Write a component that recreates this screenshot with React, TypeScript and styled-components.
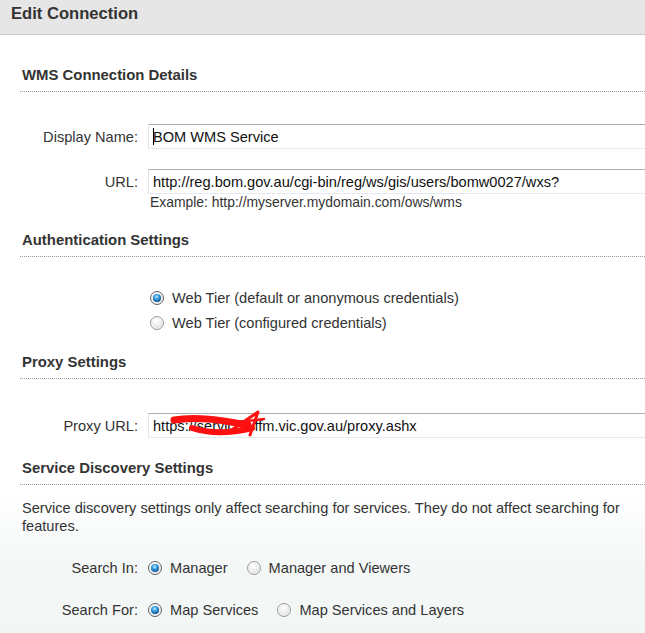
import React from "react";
import styled, { createGlobalStyle } from "styled-components";

const GlobalStyle = createGlobalStyle`
  html, body {
    margin: 0;
    padding: 0;
    background: #ffffff;
    overflow: hidden;
  }
  body {
    font-family: "Liberation Sans", Arial, sans-serif;
    color: #333333;
  }
`;

const Page = styled.div`
  width: 645px;
  min-height: 633px;
  overflow: hidden;
  background: linear-gradient(
    to bottom,
    #ffffff 0px,
    #ffffff 490px,
    #f3f7f6 570px,
    #f2f6f5 633px
  );
`;

const Header = styled.div`
  height: 34px;
  background: #e6e6e6;
  border-bottom: 1px solid #c8c8c8;
  box-sizing: content-box;
`;

const Title = styled.h1`
  margin: 0;
  padding: 4px 0 0 11px;
  font-size: 16.6px;
  line-height: 20px;
  font-weight: bold;
  color: #333333;
`;

const Body = styled.div`
  padding: 31px 0 0 20px;
  display: flex;
  flex-direction: column;
  gap: 21px;
`;

const Section = styled.section`
  display: flex;
  flex-direction: column;
`;

const Heading = styled.h2`
  margin: 0;
  padding: 0 2px 7px;
  font-size: 14.9px;
  line-height: 18px;
  font-weight: bold;
  color: #333333;
  border-bottom: 1px dotted #9a9a9a;
`;

const SectionBody = styled.div<{ $top?: number }>`
  margin-top: ${(p) => p.$top ?? 32}px;
  display: flex;
  flex-direction: column;
`;

const FieldRow = styled.div<{ $gap?: number }>`
  display: flex;
  align-items: center;
  margin-top: ${(p) => p.$gap ?? 0}px;
`;

const Label = styled.label`
  width: 118px;
  flex: none;
  text-align: right;
  font-size: 14.6px;
  color: #333333;
  padding-right: 10px;
`;

const InputWrap = styled.div`
  position: relative;
  flex: none;
`;

const TextInput = styled.input`
  box-sizing: border-box;
  width: 520px;
  height: 25px;
  margin: 0;
  padding: 0 4px;
  font-family: "Liberation Sans", Arial, sans-serif;
  font-size: 14.6px;
  color: #111111;
  background: #ffffff;
  border-style: solid;
  border-width: 1px;
  border-color: #abadb3 #dbdfe6 #e3e9ef #e2e3ea;
  outline: none;
`;

const Caret = styled.span`
  position: absolute;
  left: 5px;
  top: 4px;
  width: 1px;
  height: 17px;
  background: #000000;
`;

const Scribble = styled.svg`
  position: absolute;
  left: 20px;
  top: -6px;
  width: 100px;
  height: 34px;
  pointer-events: none;
`;

const Hint = styled.div`
  margin-left: 130px;
  font-size: 13.9px;
  line-height: 16px;
  color: #333333;
`;

const RadioList = styled.div`
  display: flex;
  flex-direction: column;
  gap: 7px;
  padding-left: 130px;
`;

const RadioOption = styled.label<{ $spaced?: boolean }>`
  display: inline-flex;
  align-items: center;
  gap: 8px;
  font-size: 14.6px;
  line-height: 18px;
  color: #333333;
  margin-left: ${(p) => (p.$spaced ? 19 : 0)}px;
`;

const RadioDot = styled.span<{ $on?: boolean }>`
  position: relative;
  width: 14px;
  height: 14px;
  flex: none;
  box-sizing: border-box;
  border-radius: 50%;
  border: 1px solid ${(p) => (p.$on ? "#5f6367" : "#9b9b9b")};
  background: radial-gradient(
    circle at 45% 35%,
    #ffffff 0%,
    #ececec 50%,
    #cdcdcd 100%
  );
  box-shadow: inset 0 0 0 1px rgba(255, 255, 255, 0.6);
  &::after {
    content: "";
    display: ${(p) => (p.$on ? "block" : "none")};
    position: absolute;
    left: 2px;
    top: 2px;
    width: 8px;
    height: 8px;
    border-radius: 50%;
    background: radial-gradient(
      circle at 45% 35%,
      #c4f0ff 0%,
      #42a9ea 30%,
      #135d98 70%,
      #0a2f50 100%
    );
  }
`;

const Paragraph = styled.p`
  margin: 14px 0 0 2px;
  max-width: 610px;
  font-size: 14.6px;
  line-height: 18px;
  color: #333333;
`;

const ChoiceRow = styled.div<{ $gap: number }>`
  display: flex;
  align-items: center;
  margin-top: ${(p) => p.$gap}px;
  line-height: 18px;
`;

const Radio: React.FC<{ on?: boolean; spaced?: boolean; children: React.ReactNode }> = ({
  on,
  spaced,
  children,
}) => (
  <RadioOption $spaced={spaced}>
    <RadioDot $on={on} />
    {children}
  </RadioOption>
);

export default function App() {
  return (
    <>
      <GlobalStyle />
      <Page>
        <Header>
          <Title>Edit Connection</Title>
        </Header>
        <Body>
          <Section>
            <Heading>WMS Connection Details</Heading>
            <SectionBody>
              <FieldRow>
                <Label>Display Name:</Label>
                <InputWrap>
                  <TextInput readOnly value="BOM WMS Service" />
                  <Caret />
                </InputWrap>
              </FieldRow>
              <FieldRow $gap={20}>
                <Label>URL:</Label>
                <InputWrap>
                  <TextInput
                    readOnly
                    value="http://reg.bom.gov.au/cgi-bin/reg/ws/gis/users/bomw0027/wxs?"
                  />
                </InputWrap>
              </FieldRow>
              <Hint>Example: http://myserver.mydomain.com/ows/wms</Hint>
            </SectionBody>
          </Section>

          <Section>
            <Heading>Authentication Settings</Heading>
            <SectionBody>
              <RadioList>
                <Radio on>Web Tier (default or anonymous credentials)</Radio>
                <Radio>Web Tier (configured credentials)</Radio>
              </RadioList>
            </SectionBody>
          </Section>

          <Section>
            <Heading>Proxy Settings</Heading>
            <SectionBody $top={34}>
              <FieldRow>
                <Label>Proxy URL:</Label>
                <InputWrap>
                  <TextInput
                    readOnly
                    value="https://services.ffm.vic.gov.au/proxy.ashx"
                  />
                  <Scribble viewBox="0 0 100 34">
                    <path
                      d="M 6 13 C 28 9, 52 13, 80 18"
                      stroke="#ff1010"
                      strokeWidth="7"
                      fill="none"
                      strokeLinecap="round"
                    />
                    <path
                      d="M 24 21 C 42 27, 64 26, 84 21"
                      stroke="#ff1010"
                      strokeWidth="6"
                      fill="none"
                      strokeLinecap="round"
                    />
                    <path
                      d="M 62 24 L 90 5 L 82 28"
                      stroke="#ff1010"
                      strokeWidth="3"
                      fill="none"
                      strokeLinejoin="round"
                      strokeLinecap="round"
                    />
                    <path
                      d="M 70 15 L 96 12"
                      stroke="#ff1010"
                      strokeWidth="2.5"
                      fill="none"
                      strokeLinecap="round"
                    />
                  </Scribble>
                </InputWrap>
              </FieldRow>
            </SectionBody>
          </Section>

          <Section>
            <Heading>Service Discovery Settings</Heading>
            <Paragraph>
              Service discovery settings only affect searching for services. They do not
              affect searching for features.
            </Paragraph>
            <ChoiceRow $gap={24}>
              <Label>Search In:</Label>
              <Radio on>Manager</Radio>
              <Radio spaced>Manager and Viewers</Radio>
            </ChoiceRow>
            <ChoiceRow $gap={24}>
              <Label>Search For:</Label>
              <Radio on>Map Services</Radio>
              <Radio spaced>Map Services and Layers</Radio>
            </ChoiceRow>
          </Section>
        </Body>
      </Page>
    </>
  );
}
